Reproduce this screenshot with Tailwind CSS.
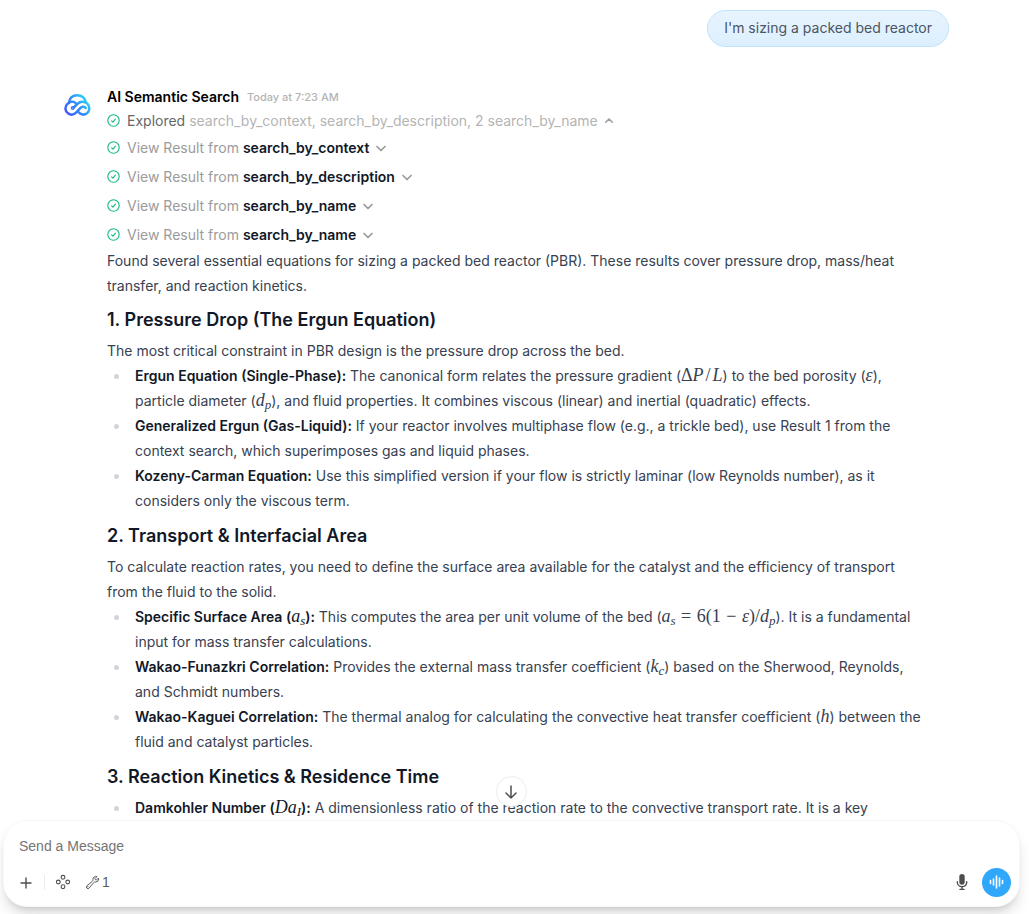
<!DOCTYPE html>
<html lang="en">
<head>
    <meta charset="UTF-8">
    <meta name="viewport" content="width=device-width, initial-scale=1.0">
    <title>AI Semantic Search</title>
    <script src="https://cdn.jsdelivr.net/npm/@tailwindcss/browser@4"></script>
</head>
<body class="h-screen bg-white font-['Inter',sans-serif] text-[#374151] flex flex-col overflow-hidden">
    <svg class="hidden">
        <symbol id="check" viewBox="0 0 24 24">
            <path fill="none" stroke="currentColor" stroke-width="2" stroke-linecap="round" stroke-linejoin="round" d="M12 1.500a10.500 10.500 0 1 0 0 21a10.500 10.500 0 0 0 0-21M8.500 12.500l2.500 2.500 4.500-5.500"></path>
        </symbol>
        <symbol id="chevron" viewBox="0 0 24 24">
            <path fill="none" stroke="currentColor" stroke-width="3.500" stroke-linecap="round" stroke-linejoin="round" d="M4 9l8 8 8-8"></path>
        </symbol>
    </svg>

    <main class="relative flex-1 min-h-0 overflow-hidden">
        <div class="pl-16 pr-20 pt-[10px]">
            <div class="flex justify-end">
                <div class="rounded-full border border-[#bfe2fb] bg-linear-to-b from-[#e8f4fe] to-[#dceffe] px-4 pt-1 pb-[6px] text-[14px] leading-[25px] text-[#4b5563]">I'm sizing a packed bed reactor</div>
            </div>

            <div class="mt-10 flex">
                <svg class="mt-[7px] h-[22px] w-[27px] shrink-0" viewBox="0 0 81 66" fill="none">
                    <defs>
                        <linearGradient id="logo" x1="6" y1="60" x2="72" y2="8" gradientUnits="userSpaceOnUse">
                            <stop stop-color="#4353fa"></stop>
                            <stop offset="0.5" stop-color="#2f8dfb"></stop>
                            <stop offset="1" stop-color="#2fe0fb"></stop>
                        </linearGradient>
                    </defs>
                    <g stroke="url(#logo)" stroke-width="7.500" stroke-linecap="round">
                        <path d="M15 27C16 12 26 4 39 4C53 4 63 12 66 25"></path>
                        <path d="M36 28C28 21 18 22 11 29C1 38 3 52 12 58C20 64 30 62 37 55L50 41C56 36 62 38 65 42"></path>
                        <path d="M29 41L41 29C50 20 63 22 70 29C79 38 77 52 69 58C60 64 50 62 43 54"></path>
                        <circle cx="26" cy="42" r="2"></circle>
                    </g>
                </svg>
                <div class="ml-4 min-w-0 flex-1">
                    <div class="flex items-center leading-5">
                        <span class="text-[14px] font-semibold text-black">AI Semantic Search</span>
                        <span class="ml-2 text-[11px] font-medium text-[#b4b4b4]">Today at 7:23 AM</span>
                    </div>

                    <button class="mt-px flex h-[25px] items-center text-[14px] text-[#b4b4b4]">
                        <svg class="mr-[7px] size-[13px] text-[#10b981]"><use href="#check"></use></svg>
                        <span><span class="text-[#676767]">Explored</span> search_by_context, search_by_description, 2 search_by_name</span>
                        <svg class="ml-[6px] size-[10px] rotate-180 text-[#9b9b9b]"><use href="#chevron"></use></svg>
                    </button>
                    <div class="mt-[2px] flex flex-col gap-1 text-[14px] text-[#9b9b9b]">
                        <button class="flex h-[25px] items-center">
                            <svg class="mr-[7px] size-[13px] text-[#10b981]"><use href="#check"></use></svg>
                            <span>View Result from <b class="font-semibold text-[#111827]">search_by_context</b></span>
                            <svg class="ml-[6px] size-3"><use href="#chevron"></use></svg>
                        </button>
                        <button class="flex h-[25px] items-center">
                            <svg class="mr-[7px] size-[13px] text-[#10b981]"><use href="#check"></use></svg>
                            <span>View Result from <b class="font-semibold text-[#111827]">search_by_description</b></span>
                            <svg class="ml-[6px] size-3"><use href="#chevron"></use></svg>
                        </button>
                        <button class="flex h-[25px] items-center">
                            <svg class="mr-[7px] size-[13px] text-[#10b981]"><use href="#check"></use></svg>
                            <span>View Result from <b class="font-semibold text-[#111827]">search_by_name</b></span>
                            <svg class="ml-[6px] size-3"><use href="#chevron"></use></svg>
                        </button>
                        <button class="flex h-[25px] items-center">
                            <svg class="mr-[7px] size-[13px] text-[#10b981]"><use href="#check"></use></svg>
                            <span>View Result from <b class="font-semibold text-[#111827]">search_by_name</b></span>
                            <svg class="ml-[6px] size-3"><use href="#chevron"></use></svg>
                        </button>
                    </div>

                    <div class="mt-px pr-6 text-[14px] leading-[25px] [&_strong]:font-semibold [&_strong]:text-[#111827] [&_h3]:text-[18px] [&_h3]:font-semibold [&_h3]:text-[#111827] [&_h3]:leading-7 [&_h3]:mt-2 [&_h3]:mb-1 [&_ul]:pl-7 [&_ul]:pb-px [&_li]:before:inline-block [&_li]:before:size-[5px] [&_li]:before:-ml-[21px] [&_li]:before:mr-4 [&_li]:before:mb-[2px] [&_li]:before:rounded-full [&_li]:before:bg-[#d1d5db] [&_li]:before:align-middle [&_i]:font-['Liberation_Serif',serif] [&_i]:text-[18px] [&_i]:leading-none [&_i]:whitespace-nowrap [&_sub]:text-[13px] [&_sub]:leading-none [&_sub]:bottom-[-3px]">
                        <p>Found several essential equations for sizing a packed bed reactor (PBR). These results cover pressure drop, mass/heat transfer, and reaction kinetics.</p>
                        <h3>1. Pressure Drop (The Ergun Equation)</h3>
                        <p>The most critical constraint in PBR design is the pressure drop across the bed.</p>
                        <ul>
                            <li><strong>Ergun Equation (Single-Phase):</strong> The canonical form relates the pressure gradient (<i><span class="not-italic">Δ</span>P<span class="mx-[2px] not-italic">/</span>L</i>) to the bed porosity (<i>ε</i>), particle diameter (<i>d<sub>p</sub></i>), and fluid properties. It combines viscous (linear) and inertial (quadratic) effects.</li>
                            <li><strong>Generalized Ergun (Gas-Liquid):</strong> If your reactor involves multiphase flow (e.g., a trickle bed), use Result 1 from the context search, which superimposes gas and liquid phases.</li>
                            <li><strong>Kozeny-Carman Equation:</strong> Use this simplified version if your flow is strictly laminar (low Reynolds number), as it considers only the viscous term.</li>
                        </ul>
                        <h3>2. Transport &amp; Interfacial Area</h3>
                        <p>To calculate reaction rates, you need to define the surface area available for the catalyst and the efficiency of transport from the fluid to the solid.</p>
                        <ul>
                            <li><strong>Specific Surface Area (<i class="font-normal">a<sub>s</sub></i>):</strong> This computes the area per unit volume of the bed (<i>a<sub>s</sub> <span class="mx-px not-italic">=</span> <span class="not-italic">6(1</span> <span class="mx-px not-italic">−</span> ε<span class="not-italic">)/</span>d<sub>p</sub></i>). It is a fundamental input for mass transfer calculations.</li>
                            <li><strong>Wakao-Funazkri Correlation:</strong> Provides the external mass transfer coefficient (<i>k<sub>c</sub></i>) based on the Sherwood, Reynolds, and Schmidt numbers.</li>
                            <li><strong>Wakao-Kaguei Correlation:</strong> The thermal analog for calculating the convective heat transfer coefficient (<i>h</i>) between the fluid and catalyst particles.</li>
                        </ul>
                        <h3>3. Reaction Kinetics &amp; Residence Time</h3>
                        <ul>
                            <li><strong>Damkohler Number (<i class="font-normal">Da<sub>I</sub></i>):</strong> A dimensionless ratio of the reaction rate to the convective transport rate. It is a key</li>
                        </ul>
                    </div>
                </div>
            </div>
        </div>

        <button aria-label="Scroll to bottom" class="absolute bottom-[13px] left-1/2 -ml-[19px] flex size-[31px] items-center justify-center rounded-full border border-[#ececec] bg-white text-[#4e4e4e]">
            <svg class="size-4" viewBox="0 0 16 16" fill="none" stroke="currentColor" stroke-width="1.500" stroke-linecap="round" stroke-linejoin="round"><path d="M8 2v12M3 9l5 5 5-5"></path></svg>
        </button>
    </main>

    <form class="relative mb-[7px] ml-[3px] mr-[9px] rounded-3xl border border-[#f7f7f7] bg-white px-[15px] pt-3 pb-[9px] shadow-lg shadow-black/15">
        <input type="text" aria-label="Message" placeholder="Send a Message" class="block h-[26px] w-full font-['Liberation_Sans',sans-serif] text-[14px] outline-none placeholder:text-[#757575]">
        <div class="mt-2 flex h-[30px] items-center text-[#4e4e4e]">
            <button type="button" aria-label="More" class="mt-px">
                <svg class="size-[14px]" viewBox="0 0 14 14" stroke="currentColor" stroke-width="1.400" stroke-linecap="round"><path d="M7 2v10M2 7h10"></path></svg>
            </button>
            <span class="ml-[11px] h-[15px] w-px bg-[#ebebeb]"></span>
            <button type="button" aria-label="Integrations" class="ml-[10px]">
                <svg class="size-4" viewBox="0 0 16 16" fill="none" stroke="currentColor" stroke-width="1.100"><circle cx="8" cy="3.300" r="1.900"></circle><circle cx="3.300" cy="8" r="1.900"></circle><circle cx="12.700" cy="8" r="1.900"></circle><circle cx="8" cy="12.700" r="1.900"></circle></svg>
            </button>
            <button type="button" aria-label="Tools" class="ml-[14px] flex items-center font-['Liberation_Sans',sans-serif] text-[14px] text-[#5d5d5d]">
                <svg class="size-[15px]" viewBox="0 0 24 24" fill="none" stroke="currentColor" stroke-width="1.600" stroke-linejoin="round" stroke-linecap="round"><path d="M21.750 6.750a4.500 4.500 0 0 1-4.884 4.484c-1.076-.091-2.264.071-2.950.904l-7.152 8.684a2.548 2.548 0 1 1-3.586-3.586l8.684-7.152c.833-.686.995-1.874.904-2.950a4.500 4.500 0 0 1 6.336-4.486l-3.276 3.276a3.004 3.004 0 0 0 2.250 2.250l3.276-3.276c.256.565.398 1.192.398 1.852ZM4.867 19.125h.008v.008h-.008v-.008Z"></path></svg>
                <span class="ml-[2px]">1</span>
            </button>
            <button type="button" aria-label="Dictate" class="ml-auto">
                <svg class="size-[18px]" viewBox="0 0 20 20" fill="currentColor"><path d="M7 4a3 3 0 0 1 6 0v6a3 3 0 1 1-6 0V4Z"></path><path d="M5.500 9.643a.75.75 0 0 0-1.500 0V10c0 3.060 2.290 5.585 5.250 5.954V17.500h-1.500a.75.75 0 0 0 0 1.500h4.500a.75.75 0 0 0 0-1.500h-1.500v-1.546A6.001 6.001 0 0 0 16 10v-.357a.75.75 0 0 0-1.500 0V10a4.500 4.500 0 0 1-9 0v-.357Z"></path></svg>
            </button>
            <button type="button" aria-label="Voice mode" class="ml-[11px] mr-[-7px] flex size-[29px] items-center justify-center rounded-full bg-[#2fa8fc] text-white">
                <svg class="size-4" viewBox="0 0 16 16" stroke="currentColor" stroke-width="1.600" stroke-linecap="round"><path d="M1.500 6.500v3M4.500 5v6M7.500 2v12M10.500 4v8M13.500 6.500v3"></path></svg>
            </button>
        </div>
    </form>
</body>
</html>
